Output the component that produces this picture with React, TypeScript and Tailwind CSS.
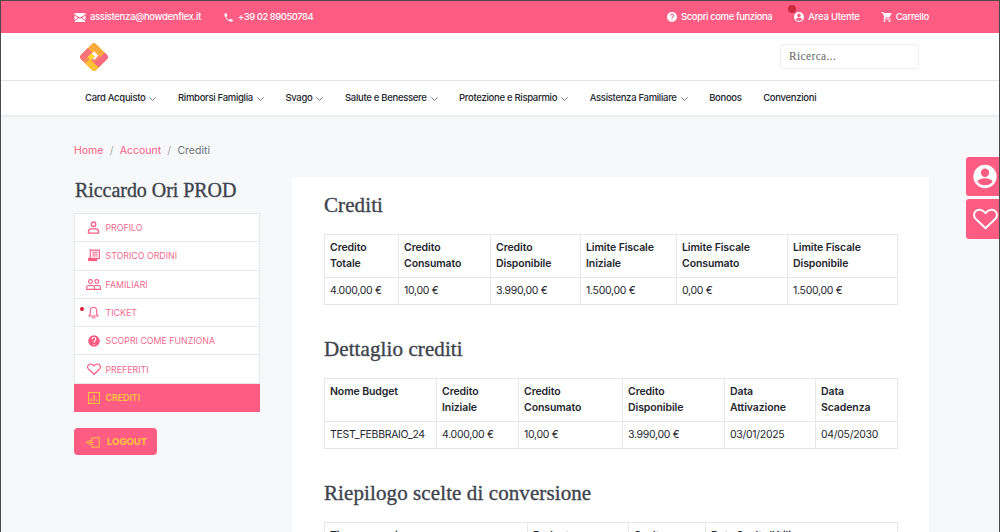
import React from "react";

const sans = "font-['Inter','Liberation_Sans',sans-serif]";
const serif = "font-['Liberation_Serif','DejaVu_Serif',serif]";
const headingBase = `leading-[24px] font-normal text-[#3e444c] [-webkit-text-stroke:0.35px_#3e444c] ${serif}`;
const headingClass = `text-[21px] tracking-[0.1px] ${headingBase}`;

function Mail() {
  return (
    <svg width="12" height="9" viewBox="0 0 11 9" fill="#fff">
      <path d="M1 0h9a1 1 0 0 1 1 1v.4L5.500 4.600 0 1.400V1a1 1 0 0 1 1-1z" />
      <path d="M0 2.600l3.400 2L0 7.300zM11 2.600l-3.400 2L11 7.300zM4.300 5.100l1.200.7 1.200-.7L11 8.300a1 1 0 0 1-1 .7H1a1 1 0 0 1-1-.7z" />
    </svg>
  );
}
function Phone() {
  return (
    <svg width="11" height="11" viewBox="0 0 24 24" fill="#fff">
      <path d="M6.600 10.800c1.400 2.800 3.800 5.100 6.600 6.600l2.200-2.200c.3-.3.7-.4 1-.2 1.100.4 2.300.6 3.600.6.6 0 1 .4 1 1V20c0 .6-.4 1-1 1C10.600 21 3 13.400 3 4c0-.6.4-1 1-1h3.500c.6 0 1 .4 1 1 0 1.300.2 2.500.6 3.600.1.300 0 .7-.2 1z" />
    </svg>
  );
}
function Help({ size = 12, color = "#fff" }: { size?: number; color?: string }) {
  return (
    <svg width={size} height={size} viewBox="0 0 24 24" fill={color}>
      <path d="M12 2a10 10 0 1 0 0 20 10 10 0 0 0 0-20zm1 17h-2v-2h2zm2.100-7.700-.9.9c-.7.7-1.200 1.300-1.200 2.800h-2v-.5c0-1.100.5-2.100 1.200-2.800l1.200-1.300c.4-.3.6-.8.6-1.400a2 2 0 0 0-4 0H8a4 4 0 0 1 8 0c0 .9-.4 1.700-.9 2.300z" />
    </svg>
  );
}
function UserCircle({ size = 12, color = "#fff" }: { size?: number; color?: string }) {
  return (
    <svg width={size} height={size} viewBox="0 0 24 24" fill={color}>
      <path d="M12 2a10 10 0 1 0 0 20 10 10 0 0 0 0-20zm0 3.200a3.600 3.600 0 1 1 0 7.200 3.600 3.600 0 0 1 0-7.200zm0 14.400c-2.700 0-5-1.200-6.400-3.100 0-2 4.300-3.100 6.400-3.100s6.400 1.100 6.400 3.100c-1.400 1.900-3.700 3.100-6.400 3.100z" />
    </svg>
  );
}
function Cart() {
  return (
    <svg width="12" height="12" viewBox="0 0 24 24" fill="#fff">
      <path d="M7 18a2 2 0 1 0 0 4 2 2 0 0 0 0-4zM1 2v2h2l3.600 7.600-1.400 2.400c-.1.300-.2.600-.2 1 0 1.100.9 2 2 2h12v-2H7.400a.25.25 0 0 1-.25-.25l.03-.12L8.100 13h7.450c.75 0 1.410-.41 1.750-1.030l3.580-6.490A1 1 0 0 0 20 4H5.210l-.94-2zm16 16a2 2 0 1 0 0 4 2 2 0 0 0 0-4z" />
    </svg>
  );
}
function Logo() {
  return (
    <svg width="30" height="30" viewBox="0 0 30 30">
      <defs>
        <clipPath id="logo-clip">
          <rect x="4.200" y="4.200" width="21.600" height="21.600" rx="3.500" />
        </clipPath>
      </defs>
      <g transform="rotate(45 15 15)" clipPath="url(#logo-clip)">
        <rect x="4" y="4" width="22" height="22" fill="#f9ab3a" />
        <rect x="19.500" y="4" width="6.500" height="15" fill="#f9697f" />
        <rect x="13" y="19.500" width="13" height="6.500" fill="#fdc233" />
        <rect x="4" y="13" width="6.500" height="13" fill="#fb7378" />
        <rect x="10.500" y="19.500" width="3" height="6.500" fill="#fb8f5a" />
        <rect x="10.500" y="14" width="5" height="5.500" fill="#ffd53a" />
        <rect x="15.500" y="10.500" width="4" height="9" fill="#fa7f6c" />
        <rect x="11" y="11" width="4.500" height="3" fill="#fff" />
        <rect x="15.500" y="11" width="1.800" height="6" fill="#fff" />
      </g>
    </svg>
  );
}

const P = { fill: "none", stroke: "#ff5c83", strokeWidth: 1.400, strokeLinecap: "round" as const, strokeLinejoin: "round" as const };

function IProfile() {
  return (
    <svg width="13" height="13" viewBox="0 0 14 14" {...P}>
      <circle cx="7" cy="3.500" r="2.400" />
      <path d="M1.500 13v-1.500a3 3 0 0 1 3-3h5a3 3 0 0 1 3 3V13z" />
    </svg>
  );
}
function IOrders() {
  return (
    <svg width="12" height="13" viewBox="0 0 13 13">
      <path d="M2.500.7h9.800v9H2.500z" fill="none" stroke="#ff5c83" strokeWidth="1.200" />
      <path d="M4.500 3h6M4.500 5h6M4.500 7h6" stroke="#ff5c83" strokeWidth="1" />
      <path d="M0 9h10v3.600H0z" fill="#ff5c83" />
    </svg>
  );
}
function IFamily() {
  return (
    <svg width="15" height="11" viewBox="0 0 15 11" fill="none" stroke="#ff5c83" strokeWidth="1.100">
      <circle cx="4.500" cy="2.500" r="1.900" />
      <circle cx="10.800" cy="2.500" r="1.900" />
      <path d="M.6 10.400V8.500a2 2 0 0 1 2-2h3.800a2 2 0 0 1 2 2v1.900zM8.500 6.500h4a2 2 0 0 1 2 2v1.900H8.400" />
    </svg>
  );
}
function IBell() {
  return (
    <svg width="11" height="13" viewBox="0 0 12 13" {...P} strokeWidth={1.200}>
      <path d="M6 .8a3.500 3.500 0 0 1 3.500 3.500V8l1.500 2.300H1L2.500 8V4.300A3.500 3.500 0 0 1 6 .8z" />
      <path d="M4.500 12.200h3" />
    </svg>
  );
}
function IHeart({ size = 14, stroke = "#ff5c83", w = 1.200 }: { size?: number; stroke?: string; w?: number }) {
  return (
    <svg width={size} height={(size * 12) / 14} viewBox="0 0 14 12" fill="none" stroke={stroke} strokeWidth={w} strokeLinejoin="round">
      <path d="M7 11.300 1.600 6.200C.1 4.700.4 2.700 1.600 1.700c1.500-1.200 3.900-.9 5.400 1.200C8.500.8 10.900.5 12.400 1.700c1.200 1 1.500 3 0 4.500z" />
    </svg>
  );
}
function IChart() {
  return (
    <svg width="12" height="12" viewBox="0 0 12 12" fill="none" stroke="#ffc83d">
      <rect x=".5" y=".5" width="11" height="11" strokeWidth="1" />
      <path d="M3.200 9.500V6.500M6 9.500V3M8.800 9.500V7.500" strokeWidth="1.200" />
    </svg>
  );
}
function ILogout() {
  return (
    <svg width="14" height="11" viewBox="0 0 14 11" fill="none" stroke="#ffc83d" strokeWidth="1" strokeLinejoin="round" strokeLinecap="round">
      <path d="M3 3.800h3V.8h7.300v9.400H6V7.200H3L.8 5.500zM7 5.500H3" />
    </svg>
  );
}
function Chevron() {
  return (
    <svg width="7" height="4" viewBox="0 0 7 4" fill="none" stroke="#555" strokeWidth="0.8" className="mt-[1px]">
      <path d="M.4.4 3.500 3.400 6.600.4" />
    </svg>
  );
}

function TopItem({ icon, label, gap = "gap-[5px]", track = "tracking-[-0.3px]" }: { icon: React.ReactNode; label: string; gap?: string; track?: string }) {
  return (
    <span className={`flex items-center ${gap} text-[9.500px] font-medium ${track} text-white ${sans}`}>
      {icon}
      {label}
    </span>
  );
}

function NavItem({ label, chevron = true }: { label: string; chevron?: boolean }) {
  return (
    <span className="flex items-center gap-[4px] text-[9.500px] font-medium tracking-[-0.3px] text-[#23272e]">
      {label}
      {chevron && <Chevron />}
    </span>
  );
}

function SideItem({ icon, label, active, dot }: { icon: React.ReactNode; label: string; active?: boolean; dot?: boolean }) {
  return (
    <div className={`relative flex h-[28.300px] items-center ${active ? "-mx-px bg-[#ff5c83] pl-[12px]" : "border-b border-[#e6e8ec] bg-white pl-[11px]"}`}>
      {dot && <span className="absolute left-[5px] top-[8px] h-[4px] w-[4px] rounded-full bg-[#d0203c]" />}
      <span className="mr-[4.500px] flex w-[15px] items-center justify-center">{icon}</span>
      <span className={`text-[8.800px] ${active ? "font-semibold text-[#ffc83d]" : "text-[#f26a8d]"}`}>{label}</span>
    </div>
  );
}

function DataTable({ widths, head, row }: { widths: number[]; head: string[][]; row?: string[] }) {
  return (
    <table className="w-[573px] table-fixed border-collapse text-[10.500px] leading-[16px] text-[#23272e]">
      <colgroup>
        {widths.map((w, i) => (
          <col key={i} style={{ width: w }} />
        ))}
      </colgroup>
      <tbody>
        <tr className="h-[43px]">
          {head.map((h, i) => (
            <td key={i} className="border border-[#e6e7ea] px-[5px] pb-[4px] pt-[5px] align-top font-semibold tracking-[-0.1px]">
              {h.map((l) => (
                <div key={l}>{l}</div>
              ))}
            </td>
          ))}
        </tr>
        {row && (
          <tr className="h-[27px]">
            {row.map((c, i) => (
              <td key={i} className="border border-[#e6e7ea] px-[5px] align-middle tracking-[-0.3px]">
                {c}
              </td>
            ))}
          </tr>
        )}
      </tbody>
    </table>
  );
}

export default function App() {
  return (
    <div className={`relative h-[532px] w-[1000px] overflow-hidden border-x border-[#4a4a4a] bg-[#f7f8fa] ${sans}`}>
      <div className="h-px bg-[#4a4a4a]" />
      <header className="flex h-[32px] items-center justify-between bg-[#ff5c83] pl-[73px] pr-[70px]">
        <div className="flex items-center gap-[22px]">
          <TopItem icon={<Mail />} label="assistenza@howdenflex.it" gap="gap-[4px]" track="tracking-[-0.33px]" />
          <TopItem icon={<Phone />} label="+39 02 89050784" gap="gap-[4px]" track="tracking-[-0.5px]" />
        </div>
        <div className="flex items-center gap-[21px]">
          <TopItem icon={<Help />} label="Scopri come funziona" gap="gap-[3px]" track="tracking-[-0.4px]" />
          <span className="relative">
            <span className="absolute -left-[5px] -top-[5px] h-[8px] w-[8px] rounded-full bg-[#c9283f]" />
            <TopItem icon={<UserCircle />} label="Area Utente" gap="gap-[3px]" track="tracking-[-0.25px]" />
          </span>
          <TopItem icon={<Cart />} label="Carrello" gap="gap-[3px]" />
        </div>
      </header>
      <div className="flex h-[48px] items-center justify-between border-b border-[#e6e7ea] bg-white pl-[78px] pr-[80px]">
        <Logo />
        <div className={`flex h-[25px] w-[139px] items-center rounded-[3px] border border-[#eceef1] bg-white pl-[8px] text-[11.500px] tracking-[0.35px] text-[#666] ${serif}`}>
          Ricerca...
        </div>
      </div>
      <nav className="flex h-[34px] items-center gap-[21.500px] bg-white pl-[84px] shadow-[0_1px_3px_rgba(0,0,0,0.08)]">
        <NavItem label="Card Acquisto" />
        <NavItem label="Rimborsi Famiglia" />
        <NavItem label="Svago" />
        <NavItem label="Salute e Benessere" />
        <NavItem label="Protezione e Risparmio" />
        <NavItem label="Assistenza Familiare" />
        <NavItem label="Bonoos" chevron={false} />
        <NavItem label="Convenzioni" chevron={false} />
      </nav>
      <div className="flex pl-[73px] pr-[70px]">
        <aside className="w-[218px] shrink-0">
          <div className="mt-[21px] flex h-[27px] items-center gap-[6.250px] pt-[2px] text-[10.500px]">
            <span className="text-[#ff5c83]">Home</span>
            <span className="text-[#aaa]">/</span>
            <span className="text-[#ff5c83]">Account</span>
            <span className="text-[#aaa]">/</span>
            <span className="text-[#6b7078]">Crediti</span>
          </div>
          <h2 className={`mt-[15px] pl-px text-[20px] tracking-[-0.05px] ${headingBase}`}>Riccardo Ori PROD</h2>
          <div className="mt-[11px] w-[186px] border-x border-t border-[#e6e8ec]">
            <SideItem icon={<IProfile />} label="PROFILO" />
            <SideItem icon={<IOrders />} label="STORICO ORDINI" />
            <SideItem icon={<IFamily />} label="FAMILIARI" />
            <SideItem icon={<IBell />} label="TICKET" dot />
            <SideItem icon={<Help size={14} color="#ff5c83" />} label="SCOPRI COME FUNZIONA" />
            <SideItem icon={<IHeart />} label="PREFERITI" />
            <SideItem icon={<IChart />} label="CREDITI" active />
          </div>
          <button className="mt-[16px] flex h-[27px] w-[83px] items-center gap-[7px] rounded-[4px] bg-[#ff5c83] pl-[12px] pt-px text-[9.500px] font-bold text-[#ffc83d]">
            <ILogout />
            LOGOUT
          </button>
        </aside>
        <main className="mt-[62px] h-[400px] w-[637px] shrink-0 rounded-[3px] bg-white pl-[32px] pt-[16px]">
          <h2 className={headingClass}>Crediti</h2>
          <div className="mt-[17px]">
            <DataTable
              widths={[74, 92, 90, 96, 111, 110]}
              head={[["Credito", "Totale"], ["Credito", "Consumato"], ["Credito", "Disponibile"], ["Limite Fiscale", "Iniziale"], ["Limite Fiscale", "Consumato"], ["Limite Fiscale", "Disponibile"]]}
              row={["4.000,00 €", "10,00 €", "3.990,00 €", "1.500,00 €", "0,00 €", "1.500,00 €"]}
            />
          </div>
          <h2 className={`mt-[32px] ${headingClass}`}>Dettaglio crediti</h2>
          <div className="mt-[17px]">
            <DataTable
              widths={[112, 82, 104, 102, 91, 82]}
              head={[["Nome Budget"], ["Credito", "Iniziale"], ["Credito", "Consumato"], ["Credito", "Disponibile"], ["Data", "Attivazione"], ["Data", "Scadenza"]]}
              row={["TEST_FEBBRAIO_24", "4.000,00 €", "10,00 €", "3.990,00 €", "03/01/2025", "04/05/2030"]}
            />
          </div>
          <h2 className={`mt-[32px] ${headingClass}`}>Riepilogo scelte di conversione</h2>
          <div className="mt-[17px]">
            <DataTable
              widths={[203, 101, 77, 192]}
              head={[["Tipo conversione"], ["Budget"], ["Scelta"], ["Data Scelta/Utilizzo"]]}
            />
          </div>
        </main>
      </div>
      <div className="absolute right-0 top-[157px] flex flex-col gap-[3px]">
        <div className="flex h-[39px] w-[33px] items-center rounded-l-[3px] bg-[#ff5c83] pl-[5px]">
          <UserCircle size={29} />
        </div>
        <div className="flex h-[40px] w-[33px] items-center rounded-l-[3px] bg-[#ff5c83] pl-[7px]">
          <IHeart size={25} stroke="#fff" w={1.100} />
        </div>
      </div>
    </div>
  );
}
